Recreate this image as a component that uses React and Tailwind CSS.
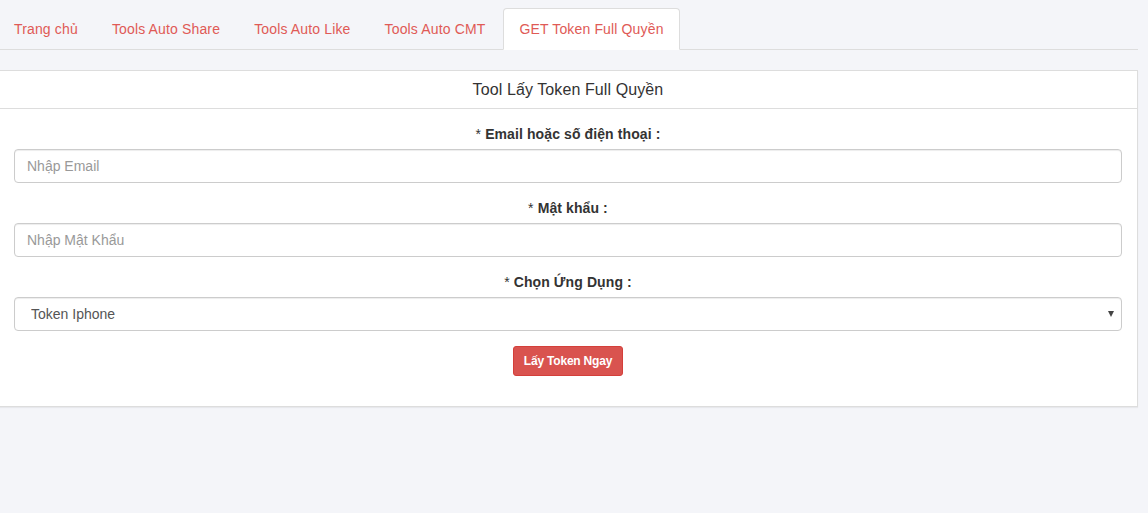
import React from 'react';

const tabs = ['Trang chủ', 'Tools Auto Share', 'Tools Auto Like', 'Tools Auto CMT', 'GET Token Full Quyền'];

function Field({ label, children }) {
  return (
    <div className="mb-[15px]">
      <label className="block text-center mb-[5px] leading-5 text-[14px] text-[#333] tracking-[0.1px]">
        <span className="font-normal">* </span>
        <span className="font-bold">{label}</span>
      </label>
      {children}
    </div>
  );
}

export default function App() {
  const active = 4;
  return (
    <div className="min-h-[513px] bg-[#f4f5f9] font-['Liberation_Sans',Arial,sans-serif] text-[14px] text-[#333]">
      <div className="w-[1140px] -ml-[2px] pt-[8px]">
        <ul className="flex border-b border-[#ddd]">
          {tabs.map((t, i) => (
            <li key={t} className="mr-[2px] -mb-px">
              <a
                className={`block px-[15px] py-[10px] leading-5 border rounded-t-[4px] text-[#e05a56] tracking-[0.15px] ${
                  i === active ? 'bg-white border-[#ddd] border-b-transparent' : 'border-transparent'
                }`}
              >
                {t}
              </a>
            </li>
          ))}
        </ul>

        <div className="mt-[20px] bg-white border border-[#ddd] shadow-[0_1px_1px_rgba(0,0,0,0.05)]">
          <div className="px-[15px] py-[10px] border-b border-[#ddd]">
            <h3 className="text-center text-[16px] leading-[17px] text-[#333] tracking-[0.1px]">Tool Lấy Token Full Quyền</h3>
          </div>
          <div className="p-[15px]">
            <Field label="Email hoặc số điện thoại :">
              <input
                placeholder="Nhập Email"
                className="block w-full h-[34px] px-[12px] py-[6px] border border-[#ccc] rounded-[4px] shadow-[inset_0_1px_1px_rgba(0,0,0,0.075)] text-[14px] text-[#555] placeholder:text-[#999] outline-none"
              />
            </Field>
            <Field label="Mật khẩu :">
              <input
                type="password"
                placeholder="Nhập Mật Khẩu"
                className="block w-full h-[34px] px-[12px] py-[6px] border border-[#ccc] rounded-[4px] shadow-[inset_0_1px_1px_rgba(0,0,0,0.075)] text-[14px] text-[#555] placeholder:text-[#999] outline-none"
              />
            </Field>
            <Field label="Chọn Ứng Dụng :">
              <div className="relative">
                <select className="block w-full h-[34px] pl-[16px] pr-[24px] border border-[#ccc] rounded-[4px] shadow-[inset_0_1px_1px_rgba(0,0,0,0.075)] text-[14px] text-[#555] bg-white appearance-none outline-none">
                  <option>Token Iphone</option>
                  <option>Token Android</option>
                </select>
                <span className="absolute right-[8px] top-[14px] w-0 h-0 border-l-[3.5px] border-r-[3.5px] border-t-[6px] border-l-transparent border-r-transparent border-t-[#444]" />
              </div>
            </Field>
            <div className="mb-[15px] flex justify-center">
              <button className="w-[110px] h-[30px] bg-[#d9534f] border border-[#d43f3a] rounded-[3px] text-white text-[12px] font-bold leading-[18px] tracking-[-0.2px]">
                Lấy Token Ngay
              </button>
            </div>
          </div>
        </div>
      </div>
    </div>
  );
}
